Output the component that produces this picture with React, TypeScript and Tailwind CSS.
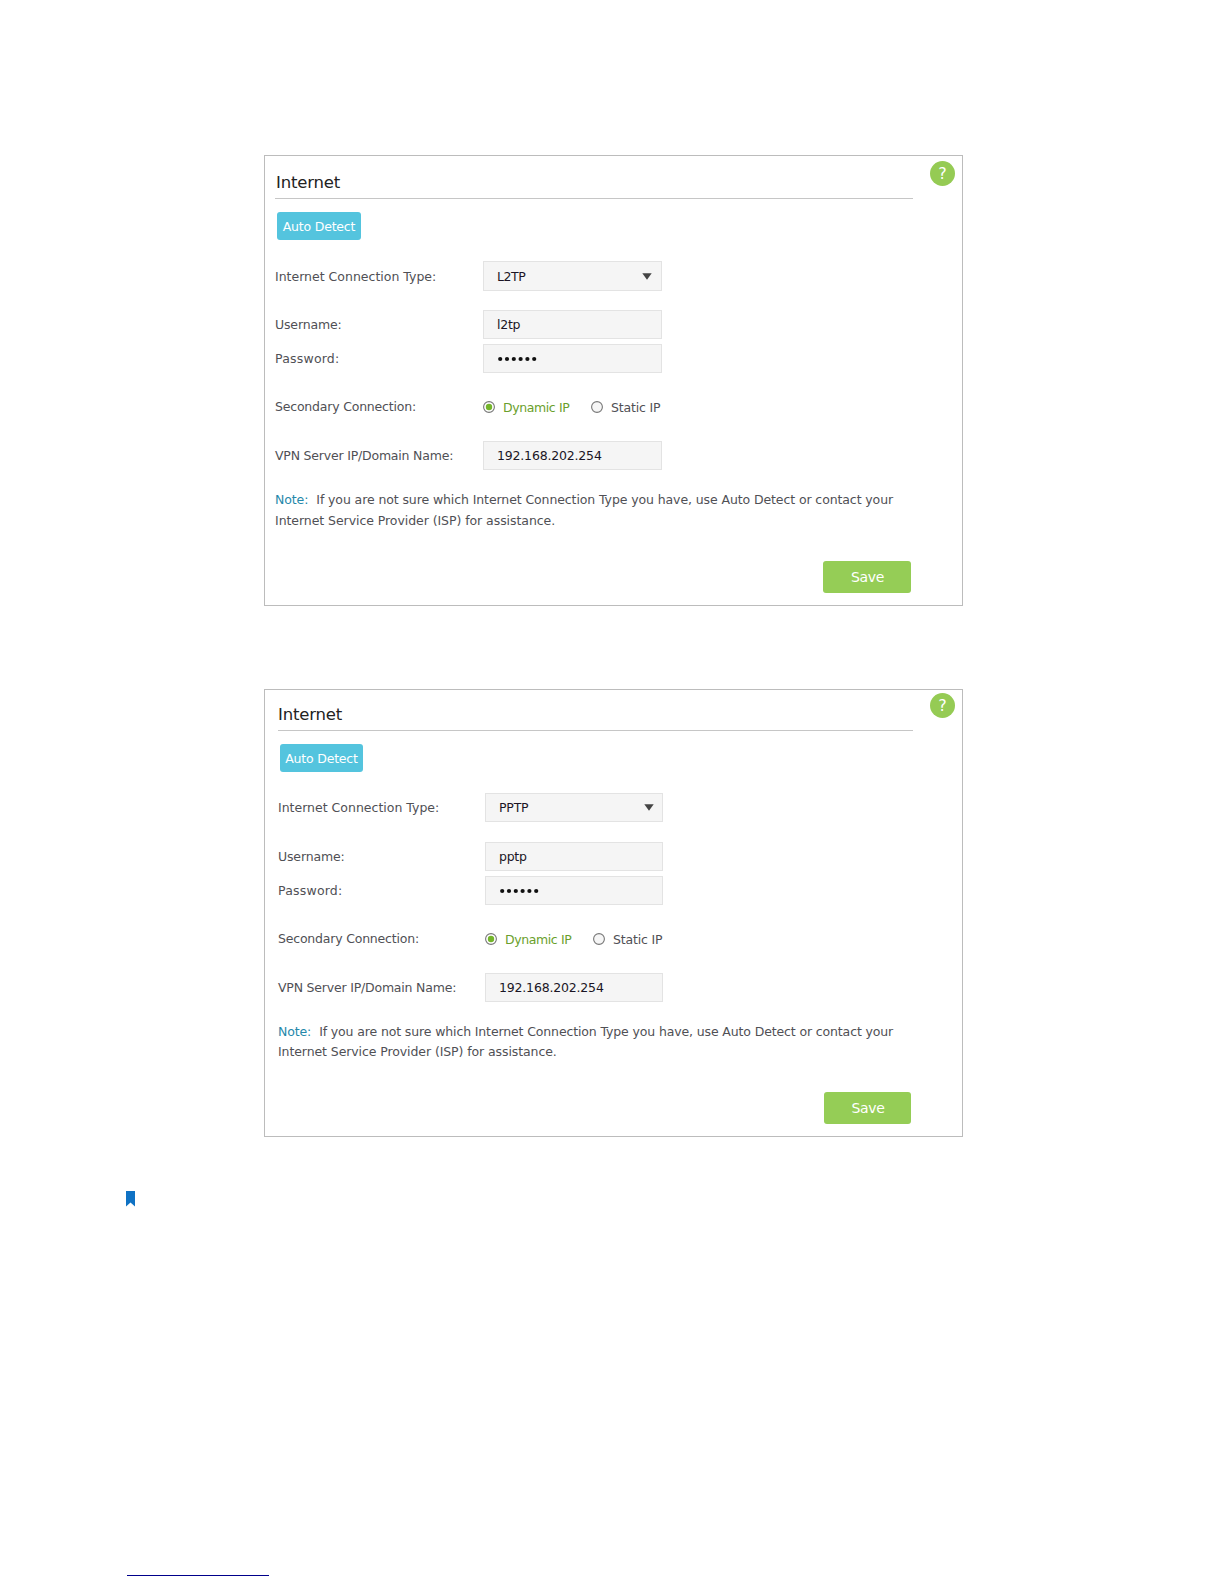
import React from 'react';
import clsx from 'clsx';

interface InternetPanelProps {
  connectionType: string;
  username: string;
  shifted?: boolean;
  className?: string;
}

interface RowProps {
  label: string;
  labelClass?: string;
  shifted: boolean;
  className?: string;
  children: React.ReactNode;
}

interface FieldProps {
  shifted: boolean;
  className?: string;
  children: React.ReactNode;
}

const Row: React.FC<RowProps> = ({ label, labelClass, shifted, className, children }) => (
  <div className={clsx('flex items-center', className)}>
    <div className={clsx('shrink-0 whitespace-nowrap', shifted ? 'w-[207px]' : 'w-52', labelClass)}>
      {label}
    </div>
    {children}
  </div>
);

const Field: React.FC<FieldProps> = ({ shifted, className, children }) => (
  <div
    className={clsx(
      'flex h-full items-center justify-between border border-[#e3e3e3] bg-[#f5f5f5] pl-[13px] text-[#1b1525]',
      shifted ? 'w-[178px] pr-2' : 'w-[179px] pr-[9px]',
      className
    )}
  >
    {children}
  </div>
);

const Radio: React.FC<{ checked?: boolean }> = ({ checked }) => (
  <svg width="12" height="12" viewBox="0 0 12 12" className="shrink-0">
    <circle cx="6" cy="6" r="5.4" fill={checked ? '#fff' : '#f6f6f6'} stroke="#777" strokeWidth="1.1" />
    {checked && <circle cx="6" cy="6" r="3.2" fill="#74b52b" />}
  </svg>
);

const InternetPanel: React.FC<InternetPanelProps> = ({
  connectionType,
  username,
  shifted = false,
  className
}) => {
  return (
    <section
      className={clsx(
        'ml-[264px] flex w-[699px] justify-between border border-[#bcbcbc] bg-white pr-[7px]',
        shifted ? 'h-[448px] pl-[13px]' : 'h-[451px] pl-2.5',
        className
      )}
    >
      <div className={shifted ? 'w-[635px]' : 'w-[638px]'}>
        {/* Title */}
        <div
          className={clsx(
            'flex items-end border-b border-[#c6c6c6] pb-[5px] text-[16.5px] leading-5 text-[#222]',
            shifted ? 'h-[41px]' : 'h-[43px] pl-px'
          )}
        >
          <span className="tracking-[-0.18px]">Internet</span>
        </div>

        {/* Auto Detect */}
        <button
          className={clsx(
            'mt-[13px] ml-0.5 flex h-7 items-center justify-center whitespace-nowrap rounded-[3px] bg-[#54c4de] pt-0.5 text-[12.5px] tracking-[-0.2px] text-white',
            shifted ? 'w-[83px]' : 'w-[84px]'
          )}
        >
          Auto Detect
        </button>

        <Row
          label="Internet Connection Type:"
          labelClass="pt-0.5"
          shifted={shifted}
          className={shifted ? 'mt-[21px] h-[29px]' : 'mt-[21px] h-[30px]'}
        >
          <Field shifted={shifted}>
            <span className={clsx('pt-0.5', shifted ? 'tracking-[-0.2px]' : 'tracking-[-0.45px]')}>{connectionType}</span>
            <svg width="10" height="7" viewBox="0 0 10 7">
              <path d="M0.3 0.3h9.4L5 6.7z" fill="#444" />
            </svg>
          </Field>
        </Row>

        <Row
          label="Username:"
          labelClass="pt-0.5 tracking-[-0.15px]"
          shifted={shifted}
          className={shifted ? 'mt-5 h-[29px]' : 'mt-[19px] h-[29px]'}
        >
          <Field shifted={shifted}>
            <span className="pt-0.5 tracking-[-0.25px]">{username}</span>
          </Field>
        </Row>

        <Row
          label="Password:"
          labelClass="pt-0.5 tracking-[0.2px]"
          shifted={shifted}
          className="mt-[5px] h-[29px]"
        >
          <Field shifted={shifted}>
            <svg width="42" height="6" viewBox="0 0 42 6" fill="#111">
              <circle cx="3.2" cy="3" r="2.1" />
              <circle cx="10" cy="3" r="2.1" />
              <circle cx="16.8" cy="3" r="2.1" />
              <circle cx="23.6" cy="3" r="2.1" />
              <circle cx="30.4" cy="3" r="2.1" />
              <circle cx="37.2" cy="3" r="2.1" />
            </svg>
          </Field>
        </Row>

        <Row
          label="Secondary Connection:"
          labelClass="tracking-[-0.2px]"
          shifted={shifted}
          className="mt-5 h-[28px]"
        >
          <div className="flex items-center whitespace-nowrap">
            <Radio checked />
            <span className="ml-2 w-[88px] pt-0.5 tracking-[-0.4px] text-[#6a9f2c]">Dynamic IP</span>
            <Radio />
            <span className="ml-2 pt-0.5 tracking-[-0.17px]">Static IP</span>
          </div>
        </Row>

        <Row
          label="VPN Server IP/Domain Name:"
          labelClass="pt-0.5 tracking-[-0.2px]"
          shifted={shifted}
          className="mt-5 h-[29px]"
        >
          <Field shifted={shifted}>
            <span className="pt-0.5 tracking-[-0.18px]">192.168.202.254</span>
          </Field>
        </Row>

        {/* Note */}
        <p className={clsx('mt-5 whitespace-nowrap', shifted ? 'leading-5' : 'leading-[20.5px]')}>
          <span className={shifted ? 'tracking-[-0.13px]' : 'tracking-[-0.1px]'}>
            <span className="mr-2 text-[#2488aa]">Note:</span>
            If you are not sure which Internet Connection Type you have, use Auto Detect or contact your
          </span>
          <br />
          <span className={shifted ? 'tracking-[-0.09px]' : 'tracking-[-0.06px]'}>
            Internet Service Provider (ISP) for assistance.
          </span>
        </p>

        {/* Save */}
        <button
          className={clsx(
            'mt-[30px] mr-0.5 ml-auto flex h-8 items-center justify-center rounded-[3px] bg-[#95cd56] pl-px text-[14px] tracking-[-0.4px] text-white',
            shifted ? 'w-[87px]' : 'w-[88px]'
          )}
        >
          Save
        </button>
      </div>

      {/* Help */}
      <div
        className={clsx(
          'flex size-[25px] items-center justify-center rounded-full bg-[#95cb54] text-[16px] text-white',
          shifted ? 'mt-[3px]' : 'mt-[5px]'
        )}
      >
        ?
      </div>
    </section>
  );
};

export default function App() {
  return (
    <main className="h-[1584px] w-[1224px] overflow-hidden bg-white pt-[155px] font-['DejaVu_Sans',Verdana,sans-serif] text-[12.5px] text-[#505055]">
      <InternetPanel connectionType="L2TP" username="l2tp" />
      <InternetPanel connectionType="PPTP" username="pptp" shifted className="mt-[83px]" />

      {/* Bookmark and footer rule */}
      <svg width="9" height="16" viewBox="0 0 9 16" className="mt-[54px] ml-[126px]">
        <path d="M0 0h9v15.5L4.5 11.5L0 15.5z" fill="#0f72c4" />
      </svg>
      <div className="mt-[368px] ml-[127px] h-px w-[142px] bg-[#00008b]" />
    </main>
  );
}
